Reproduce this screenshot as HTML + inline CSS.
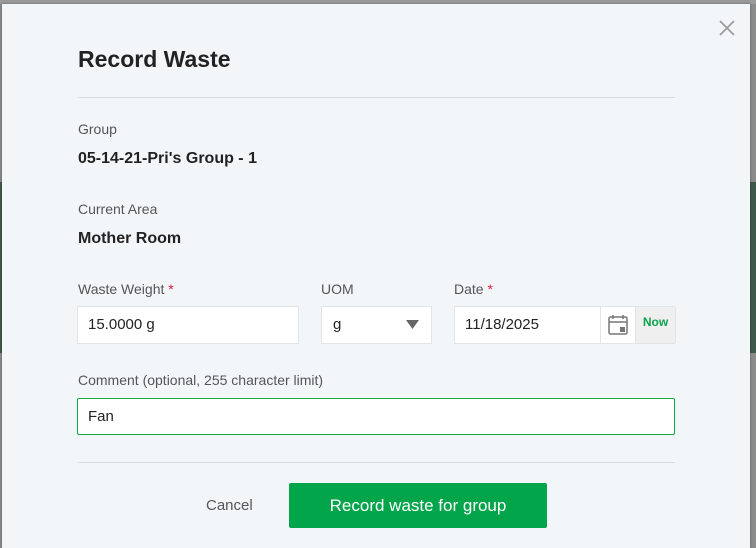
<!DOCTYPE html>
<html><head><style>
body{margin:0;width:756px;height:548px;background:#8c8c8c;position:relative;overflow:hidden;font-family:"Liberation Sans",sans-serif;}
.a{position:absolute}
.lbl{font-size:14px;color:#555;}
.val{font-size:16px;font-weight:bold;color:#222;}
.inp{background:#fff;border:1px solid #e2e4e6;box-sizing:border-box;font-size:15px;color:#222;}
.req{color:#e0193b}
</style></head><body>
<div class="a" style="left:0;top:0;width:756px;height:4px;background:#9a9a9a"></div>
<div class="a" style="left:750px;top:182px;width:6px;height:171px;background:#3f5a4b"></div>
<div class="a" style="left:0;top:182px;width:2px;height:171px;background:#3f5a4b"></div>
<div class="a" style="left:2px;top:4px;width:748px;height:544px;background:#f2f6f9;box-shadow:0 0 3px rgba(0,0,0,.3)"></div>
<svg class="a" style="left:719px;top:20px" width="16" height="16" viewBox="0 0 16 16"><path d="M1 1L15 15M15 1L1 15" stroke="#999" stroke-width="1.6"/></svg>
<div class="a" style="left:78px;top:46px;font-size:23px;font-weight:bold;color:#222">Record Waste</div>
<div class="a" style="left:78px;top:97px;width:597px;height:1px;background:#dcdfe2"></div>
<div class="a lbl" style="left:78px;top:121px">Group</div>
<div class="a val" style="left:78px;top:150px">05-14-21-Pri's Group - 1</div>
<div class="a lbl" style="left:78px;top:201px">Current Area</div>
<div class="a val" style="left:78px;top:230px">Mother Room</div>
<div class="a lbl" style="left:78px;top:281px">Waste Weight <span class="req">*</span></div>
<div class="a lbl" style="left:321px;top:281px">UOM</div>
<div class="a lbl" style="left:454px;top:281px">Date <span class="req">*</span></div>
<div class="a inp" style="left:77px;top:306px;width:222px;height:38px;padding:9px 10px">15.0000 g</div>
<div class="a inp" style="left:321px;top:306px;width:111px;height:38px;padding:9px 11px">g</div>
<svg class="a" style="left:406px;top:320px" width="13" height="10"><path d="M0 0H13L6.5 9Z" fill="#666"/></svg>
<div class="a inp" style="left:454px;top:306px;width:221px;height:38px"></div>
<div class="a" style="left:465px;top:316px;font-size:15px;color:#222">11/18/2025</div>
<div class="a" style="left:600px;top:307px;width:1px;height:36px;background:#e2e4e6"></div>
<svg class="a" style="left:608px;top:314px" width="20" height="22" viewBox="0 0 20 22"><rect x="1" y="3" width="18" height="17" rx="1.5" fill="none" stroke="#777" stroke-width="1.5"/><path d="M1 8H19" stroke="#777" stroke-width="1.5"/><path d="M5 1V5M15 1V5" stroke="#777" stroke-width="1.5"/><rect x="12" y="13" width="5" height="5" fill="#777"/></svg>
<div class="a" style="left:635px;top:307px;width:39px;height:36px;background:#efefef;border-left:1px solid #e2e4e6;border-right:1px solid #e2e4e6;font-size:12px;font-weight:bold;color:#0aa24a;text-align:center;line-height:31px">Now</div>
<div class="a lbl" style="left:78px;top:372px">Comment (optional, 255 character limit)</div>
<div class="a inp" style="left:77px;top:398px;width:598px;height:37px;border:1.5px solid #12a84c;border-radius:2px;padding:9px 10px">Fan</div>
<div class="a" style="left:78px;top:462px;width:597px;height:1px;background:#dcdfe2"></div>
<div class="a" style="left:206px;top:497px;font-size:15px;color:#555">Cancel</div>
<div class="a" style="left:289px;top:483px;width:258px;height:45px;background:#03a54a;border-radius:2px;color:#fff;font-size:17px;text-align:center;line-height:45px">Record waste for group</div>
</body></html>
